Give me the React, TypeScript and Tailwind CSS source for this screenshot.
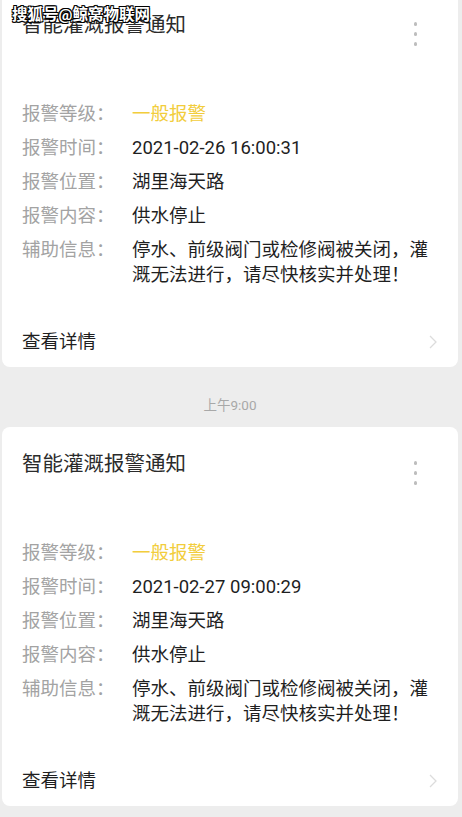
const rows1 = [
  { label: "报警等级：", value: "一般报警", warn: true },
  { label: "报警时间：", value: "2021-02-26 16:00:31" },
  { label: "报警位置：", value: "湖里海天路" },
  { label: "报警内容：", value: "供水停止" },
  { label: "辅助信息：", value: "停水、前级阀门或检修阀被关闭，灌溉无法进行，请尽快核实并处理！" },
];

const rows2 = [
  { label: "报警等级：", value: "一般报警", warn: true },
  { label: "报警时间：", value: "2021-02-27 09:00:29" },
  { label: "报警位置：", value: "湖里海天路" },
  { label: "报警内容：", value: "供水停止" },
  { label: "辅助信息：", value: "停水、前级阀门或检修阀被关闭，灌溉无法进行，请尽快核实并处理！" },
];

type Row = { label: string; value: string; warn?: boolean };

function AlarmCard({ rows }: { rows: Row[] }) {
  return (
    <div className="bg-white rounded-[8px] h-[379px] pl-[20px] pt-[23px] flex flex-col">
      <div className="flex items-start justify-between pr-[41px]">
        <div className="text-[20.5px] leading-[28px] text-[#2b2b2b]">智能灌溉报警通知</div>
        <div className="flex flex-col gap-[6.5px] mt-[11px]">
          <span className="w-[3.5px] h-[3.5px] rounded-full bg-[#bdbdbd]" />
          <span className="w-[3.5px] h-[3.5px] rounded-full bg-[#bdbdbd]" />
          <span className="w-[3.5px] h-[3.5px] rounded-full bg-[#bdbdbd]" />
        </div>
      </div>
      <div className="mt-[56px] flex flex-col gap-[8.5px]">
        {rows.map((r) => (
          <div key={r.label} className="flex text-[18.5px] leading-[25.5px]">
            <div className="w-[110px] shrink-0 text-[#a3a3a3]">{r.label}</div>
            <div className={`w-[308px] ${r.warn ? "text-[#f2cd3c]" : "text-[#1f1f1f]"}`}>{r.value}</div>
          </div>
        ))}
      </div>
      <div className="mt-[40px] flex items-center justify-between pr-[21px]">
        <div className="text-[18.5px] leading-[26px] text-[#1f1f1f]">查看详情</div>
        <svg width="8" height="14" viewBox="0 0 8 14" fill="none">
          <path d="M1 1l6 6-6 6" stroke="#dcdcdc" strokeWidth="1.3" />
        </svg>
      </div>
    </div>
  );
}

export default function App() {
  return (
    <div
      className="relative h-[817px] overflow-hidden bg-[#ededed]"
      style={{ fontFamily: 'Roboto, "Noto Sans CJK SC", sans-serif' }}
    >
      <div className="-mt-[12px] px-[2px] pr-[4px] flex flex-col">
        <AlarmCard rows={rows1} />
        <div className="pt-[29px] pb-[13px] text-center text-[13.5px] leading-[18px] text-[#a8a8a8]">上午9:00</div>
        <AlarmCard rows={rows2} />
      </div>
      <div className="absolute left-[12px] top-[5px] text-[15.5px] leading-[20px] font-bold text-white [text-shadow:-1px_-1px_0_#000,1px_-1px_0_#000,-1px_1px_0_#000,1px_1px_0_#000,0_1px_0_#000,0_-1px_0_#000]">
        搜狐号@鲸窝物联网
      </div>
    </div>
  );
}
